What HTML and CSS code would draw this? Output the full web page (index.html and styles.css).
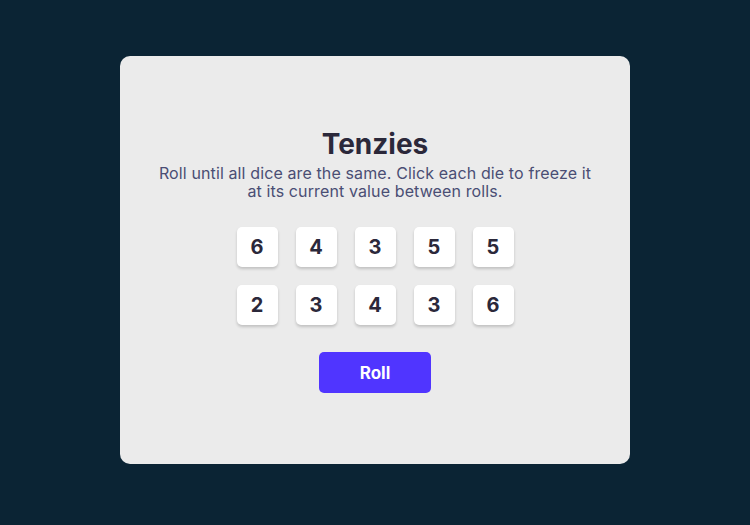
FILE: index.html
```html
<!DOCTYPE html>
<html lang="en">
<head>
<meta charset="utf-8">
<title>Tenzies</title>
<link rel="stylesheet" href="styles.css">
</head>
<body>
<main class="card">
  <h1 class="title">Tenzies</h1>
  <p class="instructions">Roll until all dice are the same. Click each die to freeze it at its current value between rolls.</p>
  <div class="dice">
    <button class="die">6</button>
    <button class="die">4</button>
    <button class="die">3</button>
    <button class="die">5</button>
    <button class="die">5</button>
    <button class="die">2</button>
    <button class="die">3</button>
    <button class="die">4</button>
    <button class="die">3</button>
    <button class="die">6</button>
  </div>
  <button class="roll">Roll</button>
</main>
</body>
</html>
```

FILE: styles.css
```css
* { box-sizing: border-box; }

html, body {
  margin: 0;
  padding: 0;
}

body {
  background: #0B2434;
  width: 750px;
  height: 525px;
  padding-top: 56px;
  font-family: Inter, "Noto Sans", sans-serif;
}

.card {
  width: 510px;
  height: 408px;
  margin-left: 120px;
  background: #EBEBEB;
  border-radius: 10px;
  display: flex;
  flex-direction: column;
  align-items: center;
  padding-top: 72px;
}

.title {
  margin: 0;
  font-size: 28px;
  line-height: 32px;
  font-weight: 700;
  color: #2B283A;
}

.instructions {
  margin: 4px 0 0;
  width: 446px;
  font-size: 16px;
  line-height: 18px;
  font-weight: 400;
  letter-spacing: 0.12px;
  color: #4A4E74;
  text-align: center;
}

.dice {
  margin-top: 27px;
  display: grid;
  grid-template-columns: repeat(5, 41px);
  grid-auto-rows: 40px;
  column-gap: 18px;
  row-gap: 18px;
}

.die {
  border: none;
  padding: 0;
  background: #FFFFFF;
  border-radius: 5px;
  box-shadow: 0 2px 3px rgba(0, 0, 0, 0.18);
  font-family: Inter, "Noto Sans", sans-serif;
  font-size: 20px;
  font-weight: 700;
  color: #2B283A;
}

.roll {
  margin-top: 27px;
  width: 112px;
  height: 41px;
  border: none;
  border-radius: 5px;
  background: #5035FF;
  color: #FFFFFF;
  font-family: Inter, "Noto Sans", sans-serif;
  font-size: 17px;
  font-weight: 700;
}
```
